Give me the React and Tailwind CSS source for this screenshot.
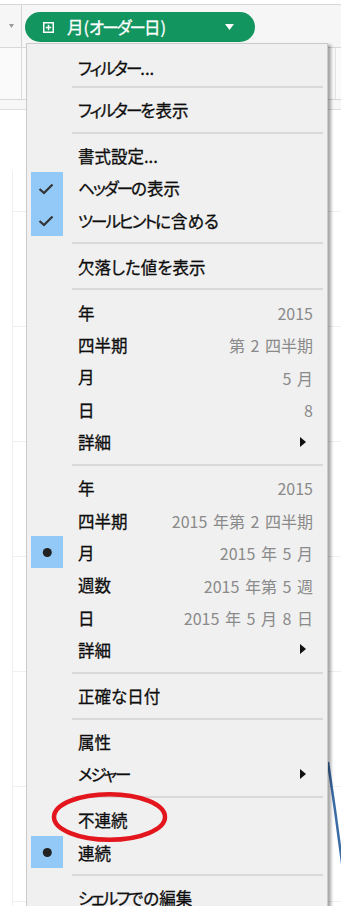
import React from 'react';

const FONT = '"Noto Sans CJK JP", "Noto Sans", sans-serif';

// メニュー項目の定義
const sections = [
  [{ label: 'フィルター...' }],
  [{ label: 'フィルターを表示' }],
  [
    { label: '書式設定...' },
    { label: 'ヘッダーの表示', mark: 'check' },
    { label: 'ツールヒントに含める', mark: 'check' },
  ],
  [{ label: '欠落した値を表示' }],
  [
    { label: '年', value: '2015' },
    { label: '四半期', value: '第 2 四半期' },
    { label: '月', value: '5 月' },
    { label: '日', value: '8' },
    { label: '詳細', sub: true },
  ],
  [
    { label: '年', value: '2015' },
    { label: '四半期', value: '2015 年第 2 四半期' },
    { label: '月', value: '2015 年 5 月', mark: 'dot' },
    { label: '週数', value: '2015 年第 5 週' },
    { label: '日', value: '2015 年 5 月 8 日' },
    { label: '詳細', sub: true },
  ],
  [{ label: '正確な日付' }],
  [{ label: '属性' }, { label: 'メジャー', sub: true }],
  [{ label: '不連続' }, { label: '連続', mark: 'dot' }],
  [{ label: 'シェルフでの編集' }],
];

// カタカナだけ詰めて表示する
function Kana({ text }) {
  const parts = text.split(/([ァ-ヶー]+)/);
  return parts.map((p, i) =>
    /^[ァ-ヶー]+$/.test(p) ? (
      <span key={i} className="tracking-[-2px]">{p}</span>
    ) : (
      <span key={i}>{p}</span>
    )
  );
}

function Mark({ type }) {
  if (!type) return <div className="w-[32px] h-full" />;
  return (
    <div className="w-[32px] h-full bg-[#93c9f6] flex items-center justify-center">
      {type === 'check' ? (
        <svg width="32" height="32" viewBox="0 0 32 32">
          <polyline points="8.5,17 13,21 21.5,12.5" fill="none" stroke="#333" strokeWidth="2.2" />
        </svg>
      ) : (
        <svg width="32" height="32" viewBox="0 0 32 32">
          <circle cx="16.3" cy="16.5" r="4.5" fill="#222" />
        </svg>
      )}
    </div>
  );
}

function MenuRow({ item }) {
  return (
    <div className="h-[32.4px] flex items-center">
      <div className="ml-[4px] h-full">
        <Mark type={item.mark} />
      </div>
      <div className="flex-1 flex items-center pl-[15px] pt-[2px] text-[16.5px] text-[#0d0d0d] [font-feature-settings:'palt'] [-webkit-text-stroke:0.3px_#0d0d0d]">
        <Kana text={item.label} />
      </div>
      {item.value && (
        <div className="pr-[14px] pt-[2px] text-[16px] text-[#8a8a8a] [word-spacing:2px]">{item.value}</div>
      )}
      {item.sub && (
        <div className="pr-[21px]">
          <svg width="6" height="10" viewBox="0 0 6 10">
            <polygon points="0,0 6,5 0,10" fill="#111" />
          </svg>
        </div>
      )}
    </div>
  );
}

function Separator({ first }) {
  return (
    <div className={first ? 'pt-[3px] pb-[5px] pl-[45px] pr-[4px]' : 'pt-[6px] pb-[5.5px] pl-[45px] pr-[4px]'}>
      <div className="h-[2px] bg-[#d9d9d9]" />
    </div>
  );
}

export default function App() {
  return (
    <div className="w-[341px] h-[917px] bg-white overflow-hidden" style={{ fontFamily: FONT }}>
      <div className="relative h-[906px] overflow-hidden flex flex-col">
        {/* 上部ツールバー */}
        <div className="h-[4px] shrink-0" />
        <div className="h-[44px] shrink-0 flex border-t border-b border-[#d8d8d8] bg-[#f6f6f6]">
          <div className="w-[22px] border-r border-[#d4d4d4] flex items-center justify-center">
            <svg width="5" height="4" viewBox="0 0 5 4" className="ml-[2px]">
              <polygon points="0,0 5,0 2.5,4" fill="#9a9a9a" />
            </svg>
          </div>
          <div className="pt-[7px] pl-[3px]">
            <div className="w-[230px] h-[30px] rounded-full bg-[#13955f] flex items-center pl-[18px] pr-[21px]">
              <svg width="11" height="11" viewBox="0 0 11 11">
                <rect x="0.75" y="0.75" width="9.5" height="9.5" fill="none" stroke="#fff" strokeWidth="1.5" />
                <line x1="5.5" y1="2.8" x2="5.5" y2="8.2" stroke="#fff" strokeWidth="1.5" />
                <line x1="2.8" y1="5.5" x2="8.2" y2="5.5" stroke="#fff" strokeWidth="1.5" />
              </svg>
              <span className="ml-[13px] flex-1 text-white text-[16.5px] [font-feature-settings:'palt'] [-webkit-text-stroke:0.3px_#fff]">
                <Kana text="月(オーダー日)" />
              </span>
              <svg width="9" height="6" viewBox="0 0 9 6">
                <polygon points="0,0 9,0 4.5,6" fill="#fff" />
              </svg>
            </div>
          </div>
          <div className="flex-1" />
        </div>
        <div className="h-[52px] shrink-0 flex border-b border-[#d8d8d8] bg-[#fafafa]">
          <div className="w-[22px] border-r border-[#dadada]" />
          <div className="flex-1" />
          <div className="w-[6px] border-l border-[#e2e2e2]" />
        </div>
        <div className="h-[10px] shrink-0 border-b border-[#dedede] bg-[#f7f7f7]" />

        {/* ビューの背景グリッド */}
        <div className="flex-1 pt-[61px]">
          <div className="ml-[12px] h-full border-l border-[#efefef]">
            <div className="h-[40px]" />
            {[0, 1, 2, 3, 4, 5, 6].map((i) => (
              <div key={i} className="h-[115px] border-t border-[#efefef]" />
            ))}
          </div>
        </div>

        {/* 折れ線 */}
        <svg className="absolute left-0 top-0" width="341" height="906">
          <polyline points="328,762 335,810 343,870" fill="none" stroke="#3b6ca6" strokeWidth="2.5" />
        </svg>

        {/* コンテキストメニュー */}
        <div className="absolute left-[26px] top-[43px] w-[302px] h-[900px] bg-[#f0f0f0] border border-[#cbcbcb] shadow-[3px_2px_3px_rgba(0,0,0,0.35)] pt-[7px]">
          {sections.map((section, si) => (
            <div key={si}>
              {si > 0 && <Separator first={si === 1} />}
              {section.map((item, ii) => (
                <MenuRow key={ii} item={item} />
              ))}
            </div>
          ))}
        </div>

        {/* 赤い丸の注記 */}
        <svg className="absolute left-[50px] top-[790px]" width="120" height="56" viewBox="0 0 120 56">
          <ellipse cx="59.5" cy="27" rx="55.5" ry="22.8" fill="none" stroke="#e3161d" strokeWidth="4.5" />
        </svg>
      </div>
      <div className="h-[11px]" />
    </div>
  );
}
